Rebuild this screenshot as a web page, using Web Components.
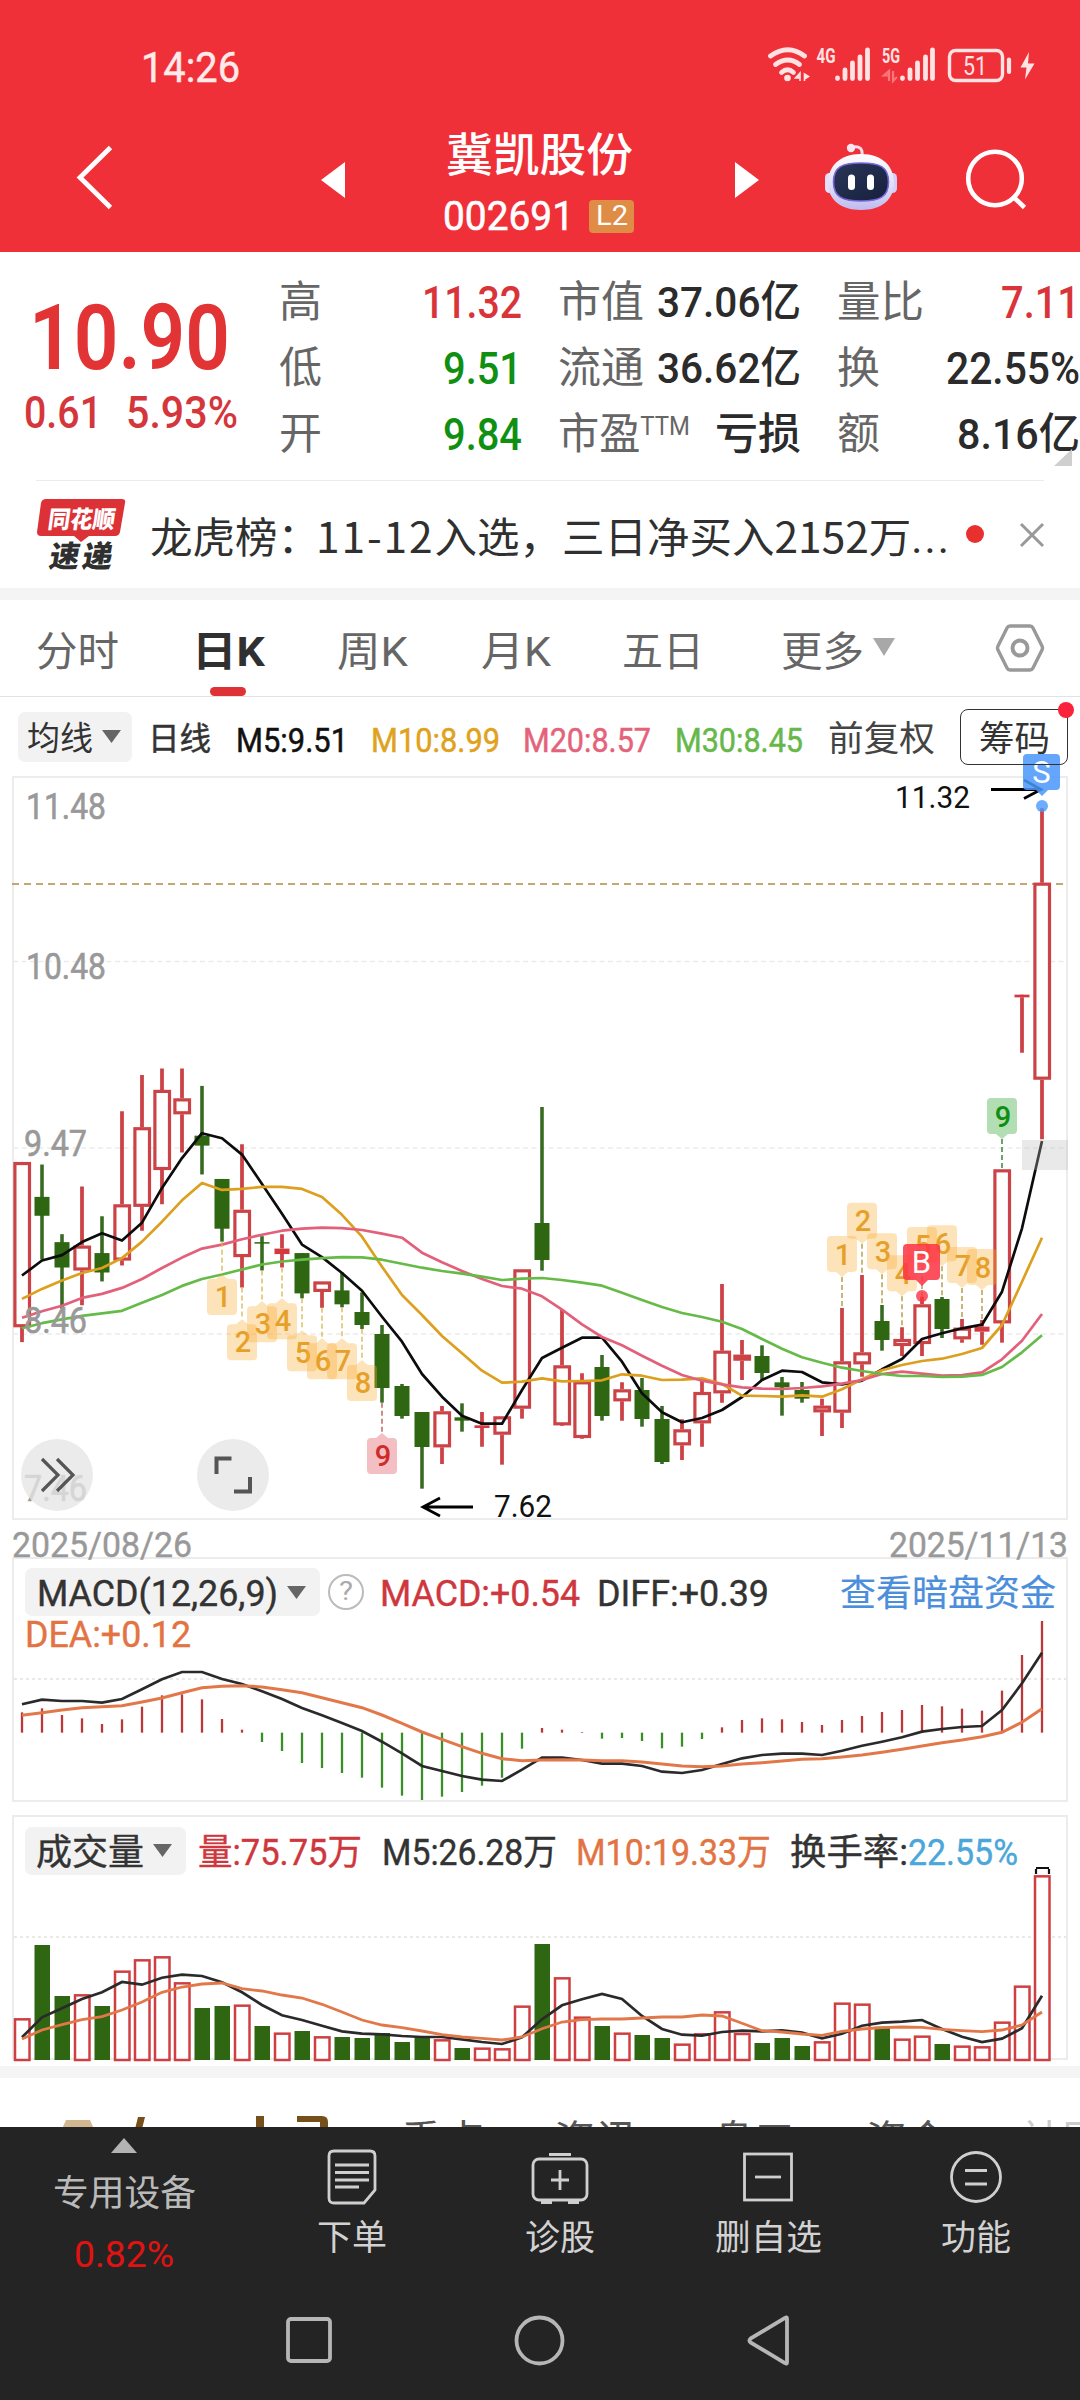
<!DOCTYPE html>
<html lang="zh-CN">
<head>
<meta charset="utf-8">
<title>冀凯股份 002691</title>
<style>
html,body{margin:0;padding:0;background:#fff}
body{width:1080px;height:2400px;overflow:hidden;font-family:Roboto,"Noto Sans CJK SC",sans-serif;color:#333}
</style>
</head>
<body>
<stock-page></stock-page>
<script>
const define = (tag, css, html, ready) => customElements.define(tag, class extends HTMLElement {
  connectedCallback() {
    if (this.shadowRoot) return;
    const root = this.attachShadow({ mode: 'open' });
    const t = document.createElement('template');
    t.innerHTML = `<style>:host{display:block;box-sizing:border-box}*{box-sizing:border-box}svg{display:block;flex:none}${css}</style>` +
      (typeof html === 'function' ? html(this) : html);
    root.append(t.content.cloneNode(true));
    if (ready) ready(this, root);
  }
});

/* text run squeezed or stretched to a given width */
define('fit-text',
  `:host{flex:none;line-height:1.2;white-space:nowrap}span{display:inline-block;transform-origin:0 50%}`,
  `<span><slot></slot></span>`,
  (el, root) => {
    const w = +el.getAttribute('w'), s = root.querySelector('span');
    el.style.width = w + 'px';
    if (el.hasAttribute('size')) el.style.fontSize = el.getAttribute('size') + 'px';
    if (el.hasAttribute('x')) el.style.marginLeft = el.getAttribute('x') + 'px';
    const n = s.getBoundingClientRect().width, dy = el.getAttribute('dy') || 1.5;
    if (n) s.style.transform = `translateY(${dy}px) scaleX(${w / n})`;
  });

define('status-bar',
  `:host{display:flex;height:130px;padding:0 44px 0 141px;justify-content:space-between;align-items:center;color:#ffeaea}svg text{font-family:Roboto}`,
  `<fit-text w="99" size="43" dy="3" style="-webkit-text-stroke:.5px">14:26</fit-text>
  <svg width="268" height="38" viewBox="768 46 268 38" fill="none" stroke="#ffe3e3">
    <g stroke-width="4.800" stroke-linecap="round"><path d="M770.500 56Q788 43.500 804.500 56"/><path d="M775.500 64.500Q788 55.500 799.500 64.500"/><path d="M781.500 72.500Q787.500 67 793.500 72.500"/></g>
    <circle cx="787.500" cy="78" r="3.300" fill="#ffe3e3" stroke="none"/>
    <path d="M800 81v-8l-4.500 5h4.500M804.500 81v-7l4 2.500-4 2.500" stroke-width="1.600" fill="#ffe3e3"/>
    <g fill="#ffe3e3" stroke="none" font-size="20" font-weight="700"><text x="816.500" y="62.500" textLength="19" lengthAdjust="spacingAndGlyphs">4G</text><text x="882" y="62.500" textLength="18" lengthAdjust="spacingAndGlyphs">5G</text></g>
    <g stroke-width="4.800" stroke-linecap="round"><path d="M837.500 78v.500M845 70v8.500M852.500 63v15.500M860 57v21.500M867.500 50v28.500"/><path d="M902.500 78v.500M910 70v8.500M917.500 63v15.500M925.500 57v21.500M932.500 50v28.500"/></g>
    <path d="M889 81v-10l-5 4.500h5M893 71v10l4-4" stroke-width="2.200" opacity=".4"/>
    <rect x="949.500" y="50.500" width="53" height="30" rx="6" stroke-width="3.400"/>
    <path d="M1009 59.500v12.500" stroke-width="4.200" stroke-linecap="round"/>
    <text x="963" y="75" font-size="25" textLength="24" lengthAdjust="spacingAndGlyphs" fill="#ffe3e3" stroke="none">51</text>
    <path d="M1029 52l-8.500 15.500h6l-1.500 12 9.500-16h-6.500z" fill="#ffe3e3" stroke="none"/>
  </svg>`);

define('title-bar',
  `:host{display:flex;height:122px;color:#fff}
  .mid{width:188px;margin-left:101px;display:flex;flex-direction:column}
  .code{display:flex;align-items:center;height:36px;margin-top:16px}
  .l2{width:48px;height:33px;border-radius:4px;background:#df8c46;display:flex;align-items:center;justify-content:center;margin-left:15px}
  .back{margin:15px 0 0 76px}.prev{margin:32px 0 0 208px}.next{margin:32px 0 0 101px}.bot{margin:12px 0 0 65px}.find{margin:18px 0 0 67px}`,
  `<svg class="back" width="37" height="65" fill="none" stroke="#fff" stroke-width="4.800"><path d="M34.500 2.500L4 32.500l30.500 30"/></svg>
  <svg class="prev" width="24" height="36" fill="#fff"><path d="M0 18L24 0v36z"/></svg>
  <div class="mid"><fit-text w="187" size="46" dy="-1" style="font-weight:500;line-height:52px">冀凯股份</fit-text>
    <div class="code"><fit-text w="131" size="41" x="-3" dy="1" style="-webkit-text-stroke:.6px">002691</fit-text><div class="l2"><fit-text w="32" size="28" dy="0">L2</fit-text></div></div></div>
  <svg class="next" width="24" height="36" fill="#fff"><path d="M24 18L0 0v36z"/></svg>
  <svg class="bot" width="74" height="70" viewBox="824 142 74 70">
    <defs><linearGradient id="h" x1="0" y1="0" x2="0" y2="1"><stop offset="0" stop-color="#fff"/><stop offset=".6" stop-color="#dcdcf4"/><stop offset="1" stop-color="#c0baf0"/></linearGradient>
    <linearGradient id="v" x1="0" y1="0" x2="1" y2="1"><stop offset="0" stop-color="#2b3658"/><stop offset="1" stop-color="#161f3d"/></linearGradient></defs>
    <path d="M862 156c1-8-3-10-9-9" fill="none" stroke="#efdcef" stroke-width="3"/><circle cx="851" cy="148" r="4.200" fill="#fbe6f0"/>
    <rect x="825" y="173" width="9" height="20" rx="4.500" fill="#e6defa"/><rect x="888" y="173" width="9" height="20" rx="4.500" fill="#d6cdf8"/>
    <path d="M861 154c22 0 33 13 33 29s-12 27-33 27-33-11-33-27 11-29 33-29z" fill="url(#h)"/>
    <path d="M861 163c19 0 27.500 4 27.500 19s-9 19-27.500 19-27.500-4-27.500-19 8.500-19 27.500-19z" fill="url(#v)" stroke="#7466d8" stroke-width="1.600"/>
    <rect x="848" y="174.500" width="7" height="15.500" rx="3.500" fill="#fff"/><rect x="867" y="174.500" width="7" height="15.500" rx="3.500" fill="#fff"/>
  </svg>
  <svg class="find" width="64" height="64" fill="none" stroke="#fff" stroke-width="4.600"><circle cx="30" cy="30.500" r="26.800"/><path d="M48.500 49l11 10.500"/></svg>`);

define('app-header', `:host{height:252px;background:#f03038}`, `<status-bar></status-bar><title-bar></title-bar>`);

define('quote-board',
  `:host{display:flex;height:229px;padding-top:16px;position:relative;font-size:44px}
  .price{width:250px;margin-left:24px;color:#dc3236;padding-top:17px}
  .chg{display:flex;margin-top:-4px;color:#d5363c;font-weight:500}
  .cols{display:flex}.c{display:flex;flex-direction:column}
  .r{height:66px;display:flex;align-items:center;justify-content:space-between}
  .l{color:#666}.v{font-weight:500;color:#2b2b2b}.red{color:#d8343a}.green{color:#109013}
  .fold{position:absolute;left:1054px;top:197px}
  .line{position:absolute;left:36px;right:36px;bottom:0;height:1.500px;background:#ececec}`,
  `<div class="price"><fit-text w="201" size="90" x="5" dy="2" style="font-weight:600;line-height:104px;color:#e23335">10.90</fit-text>
    <div class="chg"><fit-text w="78" x="0">0.61</fit-text><fit-text w="112" x="24">5.93%</fit-text></div></div>
  <div class="cols">
    <div class="c" style="width:243px;margin-left:6px">
      <div class="r"><fit-text class="l" w="43" size="43">高</fit-text><fit-text class="v red" w="100">11.32</fit-text></div>
      <div class="r"><fit-text class="l" w="43" size="43">低</fit-text><fit-text class="v green" w="79">9.51</fit-text></div>
      <div class="r"><fit-text class="l" w="43" size="43">开</fit-text><fit-text class="v green" w="79">9.84</fit-text></div>
    </div>
    <div class="c" style="width:243px;margin-left:36px">
      <div class="r"><fit-text class="l" w="86" size="43">市值</fit-text><fit-text class="v" w="144" size="43">37.06亿</fit-text></div>
      <div class="r"><fit-text class="l" w="86" size="43">流通</fit-text><fit-text class="v" w="144" size="43">36.62亿</fit-text></div>
      <div class="r"><fit-text class="l" w="132" size="43">市盈<span style="font-size:25px;vertical-align:14px;line-height:0">TTM</span></fit-text><fit-text class="v" w="86" size="43">亏损</fit-text></div>
    </div>
    <div class="c" style="width:243px;margin-left:36px">
      <div class="r"><fit-text class="l" w="87" size="43">量比</fit-text><fit-text class="v red" w="79">7.11</fit-text></div>
      <div class="r"><fit-text class="l" w="43" size="43">换</fit-text><fit-text class="v" w="134">22.55%</fit-text></div>
      <div class="r"><fit-text class="l" w="43" size="43">额</fit-text><fit-text class="v" w="123" size="43">8.16亿</fit-text></div>
    </div>
  </div>
  <svg class="fold" width="18" height="17" fill="#cfcfcf"><path d="M18 0v17H0z"/></svg><div class="line"></div>`);

define('news-ticker',
  `:host{display:flex;height:107px;align-items:center;padding-left:36px}
  .dot{width:18px;height:18px;border-radius:9px;background:#e8302f;margin:-1px 0 0 15px}
  svg text{font-family:"Noto Sans CJK SC";font-weight:900}`,
  `<svg width="90" height="76" viewBox="36 496 90 76"><path d="M46 498h76q4 0 3 4l-5 29q-1 4-5 4H89l-8 6-7-6H41q-4 0-4-4l4-29q1-4 5-4z" fill="#dc3237"/>
    <text transform="translate(47 526.500) skewX(-8)" font-size="24" textLength="67" lengthAdjust="spacingAndGlyphs" fill="#fff">同花顺</text>
    <text transform="translate(48 566) skewX(-10)" font-size="30" textLength="63" lengthAdjust="spacing" fill="#2f2f2f">速递</text></svg>
  <fit-text w="801" size="42" x="24" dy="2.500" style="font-family:'Noto Sans CJK SC';line-height:56px;margin-top:-2px;color:#303030">龙虎榜：<span style="margin-left:-4px;letter-spacing:1.900px">11-12</span>入选，三日净买入2152万<span style="font-family:Roboto;letter-spacing:2px">...</span></fit-text>
  <div class="dot"></div>
  <svg style="margin-left:35px" width="26" height="26" stroke="#999" stroke-width="3"><path d="M2 2l22 22M24 2L2 24"/></svg>`);

define('period-tabs',
  `:host{display:flex;height:97px;border-bottom:1.500px solid #e2e2e2;align-items:center;color:#666;padding:5px 0 0 36px}
  .on{font-weight:700;color:#303030;position:relative}
  .on i{position:absolute;left:18px;top:61px;width:36px;height:9px;border-radius:4.500px;background:#de3237}`,
  `<fit-text w="83" size="41">分时</fit-text>
  <div class="on" style="margin-left:73px"><fit-text w="73" size="41">日K</fit-text><i></i></div>
  <fit-text w="71" size="41" x="72">周K</fit-text>
  <fit-text w="70" size="41" x="73">月K</fit-text>
  <fit-text w="82" size="41" x="71">五日</fit-text>
  <fit-text w="83" size="41" x="77">更多</fit-text>
  <svg style="margin:-7px 0 0 9px" width="22" height="18" fill="#a8a8a8"><path d="M0 0h22L11 18z"/></svg>
  <svg style="margin:-6px 0 0 100px" width="50" height="48" fill="none" stroke="#999" stroke-width="3.400"><path d="M15 2h20q2 0 3 2l9 18q1 2 0 4l-9 18q-1 2-3 2H15q-2 0-3-2L3 26q-1-2 0-4l9-18q1-2 3-2z"/><circle cx="25" cy="24" r="7.500" stroke-width="4"/></svg>`);

define('drop-button',
  `:host{display:flex;align-items:center;background:#f2f2f2;border-radius:7px;flex:none;color:#333}
  svg{margin-left:9px}`,
  `<slot></slot><svg width="19" height="13" fill="#666"><path d="M0 0h19L9.500 13z"/></svg>`);

define('ma-legend',
  `:host{display:flex;height:79px;align-items:center;padding:0 0 0 18px;color:#333}
  .m{-webkit-text-stroke:.5px}
  .chip{width:108px;height:56px;border:1.500px solid #333;border-radius:8px;margin-left:25px;display:flex;align-items:center;justify-content:center;position:relative}
  .chip i{position:absolute;width:16px;height:16px;border-radius:8px;background:#f9243c;right:-7px;top:-8px}`,
  `<drop-button style="width:114px;height:50px;padding-left:9px"><fit-text w="66" size="33">均线</fit-text></drop-button>
  <fit-text class="m" w="63" size="32" x="16" dy="3">日线</fit-text>
  <fit-text class="m" w="112" size="33" x="25" dy="3.500" style="color:#111">M5:9.51</fit-text>
  <fit-text class="m" w="129" size="33" x="23" dy="3.500" style="color:#e0a21c">M10:8.99</fit-text>
  <fit-text class="m" w="128" size="33" x="23" dy="3.500" style="color:#e4637a">M20:8.57</fit-text>
  <fit-text class="m" w="128" size="33" x="24" dy="3.500" style="color:#66b84a">M30:8.45</fit-text>
  <fit-text w="107" size="35" x="25" dy="2.500" style="color:#444">前复权</fit-text>
  <div class="chip"><fit-text w="71" size="35" dy="3">筹码</fit-text><i></i></div>`);

const X = i => 22 + 20 * i;
const pts = (ys, f) => ys.map((v, i) => X(i) + ',' + f(v).toFixed(1)).join(' ');
const A = v => 770 + v / 2.01, B = v => 1050 + v / 3, C = v => 1150 + v / 3, D = v => 740 + v / 3;
/* segments: first 17 points on scale A, next 19 on B, last 16 on C */
const join = (a, b, c) => [...a.map(A), ...b.map(B), ...c.map(C)];
const ma5 = join([1016,986,975,949,931,946,910,840,780,730,740,773,832,892,954,979,1011],
  [722,800,875,972,1040,1097,1121,1121,1020,924,893,863,863,935,1030,1087,1117,1104,1080],
  [741,690,662,666,697,703,692,658,627,567,550,535,524,425,235,-27]);
const ma10 = join([1063,1043,1026,1011,1001,981,948,908,865,830,844,842,838,838,842,858,894],
  [560,650,735,795,858,910,962,998,995,985,994,993,991,973,977,990,989,985,1002],
  [737,738,740,736,740,718,688,661,645,633,626,612,594,525,395,263]);
const ma20 = join([1101,1088,1077,1061,1053,1041,1023,1001,980,962,954,943,934,926,922,920,921],
  [540,551,563,608,637,663,687,708,716,739,779,823,861,886,917,947,975,992,1003],
  [712,716,717,714,709,701,690,672,665,671,677,675,667,628,572,492]);
const ma30 = join([1122,1112,1104,1097,1092,1087,1071,1055,1037,1023,1014,1004,994,988,984,981,979],
  [622,629,641,653,663,671,680,690,686,684,690,698,707,728,750,771,789,801,815],
  [537,567,596,622,638,653,663,672,678,678,681,680,675,651,607,556]);
/* colour, high, low, body top, body bottom */
const candles = [
  ...[['r',788,1150,788,1120],['g',793,984,858,896],['g',933,1083,949,1000],['r',837,1076,956,1006],['g',897,1028,971,1010],['r',686,996,873,986],['r',613,926,718,878],['r',600,873,643,804],['r',600,769,660,692],['g',635,813,735,755],['g',822,948,822,922],['r',752,1040,884,979],['g',937,1006,949,952],['r',933,1000,962,973],['g',971,1062,971,1052],['r',1028,1081,1028,1049],['g',1010,1080,1046,1074]].map(([k,...v]) => [k,...v.map(A)]),
  ...[['g',727,837,786,825],['g',825,1058,852,1014],['g',1002,1106,1008,1098],['g',1086,1316,1086,1191],['r',1068,1242,1084,1192],['g',1060,1145,1102,1112],['r',1086,1190,1126,1134],['r',1099,1244,1099,1154],['r',658,1106,658,1076],['g',171,662,519,630],['r',780,1128,946,1126],['r',970,1166,994,1164],['g',915,1112,951,1098],['r',997,1112,1018,1054],['g',984,1130,1020,1107],['g',1068,1242,1107,1236],['r',1108,1230,1138,1186],['r',990,1190,1026,1120],['r',702,1058,902,1030],['r',870,990,914,932]].map(([k,...v]) => [k,...v.map(B)]),
  ...[['g',586,690,618,669],['g',681,797,697,712],['g',696,758,720,746],['r',746,858,767,787],['r',474,834,634,788],['r',375,680,607,643],['g',465,602,513,570],['r',532,618,567,588],['r',440,618,463,582],['g',441,564,447,537],['r',507,578,533,568],['r',510,584,530,545],['r',58,578,58,520]].map(([k,...v]) => [k,...v.map(C)]),
  ...[['r',766,938,764,772],['r',205,1198,428,1019]].map(([k,...v]) => [k,...v.map(D)])
];
const candle = ([k, h, l, t, b], i) => {
  const x = X(i);
  if (k === 'g') return `<path d="M${x} ${h}V${l}" stroke="#366b22" stroke-width="3.6"/><rect x="${x - 7.5}" y="${t}" width="15" height="${Math.max(b - t, 1.5)}" fill="#2f6612"/>`;
  const wick = `<path d="M${x} ${h}V${t}M${x} ${b}V${l}" stroke="#cc4347" stroke-width="3.8"/>`;
  return wick + (b - t < 5.9 ? `<rect x="${x - 7.5}" y="${t}" width="15" height="${b - t}" fill="#d23a3f"/>`
    : `<rect x="${x - 7.1}" y="${t + 1.5}" width="14.6" height="${b - t - 3}" fill="#fff" stroke="#cc4347" stroke-width="3.2"/>`);
};
const amber = ['#f8ae33', '#e6a02a', '.34'], rose = ['#e0444c', '#cf2b2b', '.34'], leaf = ['#2ba02b', '#0f8f12', '.36'];
/* count marks below (apex up) and above (apex down) the candles */
const below = (n, i, top, low, c = amber) => { const x = X(i);
  return `<path d="M${x} ${low}V${top}" stroke="${c === amber ? '#d9b552' : '#b0504c'}" stroke-width="1.3" stroke-dasharray="5 3"/>
  <path d="M${x} ${top}l6 5h5q4 0 4 4v28q0 4-4 4h-22q-4 0-4-4v-28q0-4 4-4h5z" fill="${c[0]}" fill-opacity="${c[2]}"/>
  <text x="${x + 1}" y="${top + 33}" text-anchor="middle" font-size="29" font-weight="500" fill="${c[1]}">${n}</text>`; };
const above = (n, i, top, high, c = amber) => { const x = X(i);
  return `<path d="M${x} ${top + 41}V${high}" stroke="${c === amber ? '#b09a40' : '#2f7a2f'}" stroke-width="1.400" stroke-dasharray="5 3"/>
  <path d="M${x} ${top + 41}l6-5h5q4 0 4-4v-28q0-4-4-4h-22q-4 0-4 4v28q0 4 4 4h5z" fill="${c[0]}" fill-opacity="${c[2]}"/>
  <text x="${x + 1}" y="${top + 28.5}" text-anchor="middle" font-size="29" font-weight="500" fill="${c[1]}">${n}</text>`; };
const deal = (s, x, top, c) => `<path d="M${x} ${top + 42}l6-6h8q4 0 4-4v-28q0-4-4-4h-29q-4 0-4 4v28q0 4 4 4h9z" fill="${c}" fill-opacity=".86"/><circle cx="${x}" cy="${top + 52}" r="6" fill="${c}" fill-opacity=".8"/><text x="${x - .5}" y="${top + 29}" text-anchor="middle" font-size="31" fill="#fff">${s}</text>`;

define('k-line-chart',
  `:host{height:744px}svg{overflow:visible}text{font-family:Roboto,sans-serif}`,
  () => `<svg width="1080" height="744" viewBox="0 776 1080 744">
  <rect x="13" y="777" width="1054" height="742" fill="none" stroke="#ececec" stroke-width="2"/>
  <path d="M13 961.500H1064M13 1148H1064M13 1334H1064" stroke="#ebebeb" stroke-width="1.700" stroke-dasharray="5 3.500"/>
  <path d="M12 884H1064" stroke="#c3a873" stroke-width="1.800" stroke-dasharray="7 5"/>
  ${candles.map(candle).join('')}
  <g fill="none" stroke-width="2.700" stroke-linejoin="round">
    <polyline points="${pts(ma5, v => v)}" stroke="#0c0c0c"/><polyline points="${pts(ma10, v => v)}" stroke="#dd9f1e"/>
    <polyline points="${pts(ma20, v => v)}" stroke="#e2607a"/><polyline points="${pts(ma30, v => v)}" stroke="#66bb48"/></g>
  <g font-size="36" fill="#999" stroke="#999" stroke-width=".6">
    <text x="26" y="819" textLength="80" lengthAdjust="spacingAndGlyphs">11.48</text><text x="26" y="978.500" textLength="80" lengthAdjust="spacingAndGlyphs">10.48</text>
    <text x="24" y="1156" textLength="63" lengthAdjust="spacingAndGlyphs">9.47</text><text x="24" y="1333" textLength="63" lengthAdjust="spacingAndGlyphs">8.46</text>
    <text x="24" y="1501" textLength="63" lengthAdjust="spacingAndGlyphs">7.46</text></g>
  ${[['1',10,1013,948],['2',11,1104,1040],['3',12,1068,1006],['4',13,1062,1000],['5',14,1126,1062],['6',15,1142,1081],['7',16,1142,1080],['8',17,1186,1123]].map(([n,i,t,l]) => below(n, i, A(t), A(l))).join('')}
  ${below('9', 18, 1433, B(1058), rose)}
  ${[['1',41,258,474],['2',42,158,375],['3',43,250,465],['4',44,316,532],['5',45,231,440],['6',46,226,441],['7',47,291,507],['8',48,297,510]].map(([n,i,t,h]) => above(n, i, C(t), C(h))).join('')}
  ${above('9', 49, 1098, C(58), leaf)}
  <rect x="1022" y="1140" width="46" height="30" fill="#bbb" fill-opacity=".32"/>
  <g fill="none" stroke="#000" stroke-width="2.800"><path d="M991 789.500H1041M1024 780l17 9.500-17 9"/><path d="M473 1507H424M440 1498l-17 9 17 9"/></g>
  <g font-size="31" fill="#111"><text x="895" y="808" textLength="75" lengthAdjust="spacingAndGlyphs">11.32</text><text x="494" y="1516.500" textLength="58" lengthAdjust="spacingAndGlyphs">7.62</text></g>
  ${deal('B', 922, 1244, '#fb3345')}${deal('S', 1042, 754, '#4a97fc')}
  <g fill="#e6e6e6" fill-opacity=".78"><circle cx="57" cy="1475" r="36"/><circle cx="233" cy="1475" r="36"/></g>
  <g fill="none" stroke="#555" stroke-width="3.200"><path d="M42 1459l16 16-16 16M57 1459l16 16-16 16"/><path d="M216.500 1474v-15.500h15M250 1477v14.500h-16" stroke-width="4"/></g>
  </svg>`);

define('date-axis', `:host{display:flex;justify-content:space-between;height:37px;padding:0 12px;color:#999;font-size:35px}fit-text{line-height:48px;-webkit-text-stroke:.4px}`,
  `<fit-text w="180" dy="2">2025/08/26</fit-text><fit-text w="179" dy="2">2025/11/13</fit-text>`);

const M = v => 1520 + v / 3, V = v => 1800 + v / 3;
const macd = [577,565,585,595,612,598,560,526,523,538,597,629,666,693,729,744,759,773,803,827,842,830,816,797,773,686,624,629,636,656,654,663,685,680,657,622,600,595,598,606,615,600,588,576,570,555,559,566,572,512,405,303];
const diff = [553,539,543,543,548,537,508,478,456,456,477,492,514,537,564,586,609,633,665,700,738,753,768,779,783,749,713,713,720,731,731,738,755,759,750,732,715,705,701,701,705,692,677,665,652,635,627,621,618,570,490,398];
const dea = [586,578,570,563,560,557,546,534,518,503,499,497,501,509,518,533,548,563,585,610,636,658,680,700,716,722,720,719,720,722,722,726,732,738,740,738,732,728,723,718,716,711,705,697,688,678,668,660,650,637,607,566];

define('macd-panel',
  `:host{height:245px;margin:0 12px;border:2px solid #ececec;color:#333;padding:9px 0 0 11px;display:flex;flex-direction:column;overflow:hidden}
  .row{display:flex;align-items:center;height:50px;-webkit-text-stroke:.4px}.row2{height:36px;color:#e27443;-webkit-text-stroke:.4px}
  .help{width:36px;height:36px;border:2px solid #bbb;border-radius:18px;color:#aaa;display:flex;align-items:center;justify-content:center;margin-left:8px;-webkit-text-stroke:0}
  svg.plot{margin:0 0 0 -13px}`,
  () => `<div class="row"><drop-button style="width:295px;height:48px;padding-left:12px"><fit-text w="241" size="36" dy="3">MACD(12,26,9)</fit-text></drop-button>
    <div class="help"><fit-text w="14" size="26" dy="0">?</fit-text></div>
    <fit-text w="200" size="36" x="16" dy="3" style="color:#ce373d">MACD:+0.54</fit-text><fit-text w="172" size="36" x="17" dy="3">DIFF:+0.39</fit-text>
    <fit-text w="216" size="36" x="71" dy="3" style="color:#4b8edb;-webkit-text-stroke:.2px">查看暗盘资金</fit-text></div>
  <div class="row2"><fit-text w="166" size="36" dy="3" style="margin-top:-5px">DEA:+0.12</fit-text></div>
  <svg class="plot" style="margin-top:-84.500px" width="1056" height="243" viewBox="12 1568 1056 243" overflow="visible">
    <path d="M14 1679H1066" stroke="#e3e3dc" stroke-width="1.400" stroke-dasharray="3 3"/>
    ${macd.map((v, i) => `<path d="M${X(i)} ${M(638)}V${M(v)}" stroke="${v > 638 ? '#388f27' : '#b9383a'}" stroke-width="2.300"/>`).join('')}
    <polyline points="${pts(diff, M)}" fill="none" stroke="#2a2a2a" stroke-width="2.700"/><polyline points="${pts(dea, M)}" fill="none" stroke="#e2784a" stroke-width="3"/>
  </svg>`);

const vols = 'r655 g435 g588 r583 g618 r512 r478 r469 r547 g624 g618 r614 g678 r698 g693 r709 g711 g714 g699 g726 g711 r718 g744 r743 r745 r617 g432 r532 r650 g678 r698 g705 g714 r731 r700 r634 r699 g729 g714 g738 r724 r608 r611 g680 r716 r707 g732 r737 r739 r665 r557 r226'.split(' ');
const vm5 = [712,652,625,597,577,546,554,533,524,528,547,577,615,646,660,677,694,701,703,708,711,711,718,726,732,712,658,616,598,582,597,648,687,704,707,696,692,694,691,698,715,701,677,668,665,660,687,710,726,716,685,587];
const vm10 = [717,690,674,659,650,630,606,577,561,552,549,566,573,585,594,613,636,660,675,683,693,704,711,715,720,711,686,666,659,657,657,654,651,651,645,648,670,692,696,702,706,694,687,683,681,682,688,692,695,690,675,636];

define('volume-panel',
  `:host{height:245px;margin:13px 12px 0;border:2px solid #ececec;padding:9px 0 0 11px;color:#333}
  .row{display:flex;align-items:center;height:49px;-webkit-text-stroke:.4px}svg.plot{overflow:visible;margin:-58px 0 0 -13px}`,
  () => `<div class="row"><drop-button style="width:161px;height:48px;padding-left:11px"><fit-text w="108" size="36" dy="3">成交量</fit-text></drop-button>
    <fit-text w="164" size="36" x="12" dy="3" style="color:#ce373d">量:75.75万</fit-text><fit-text w="175" size="36" x="20" dy="3">M5:26.28万</fit-text>
    <fit-text w="195" size="36" x="19" dy="3" style="color:#e27443">M10:19.33万</fit-text><fit-text w="118" size="36" x="19" dy="3">换手率:</fit-text><fit-text w="110" size="36" x="0" dy="3" style="color:#4ba7da">22.55%</fit-text></div>
  <svg class="plot" width="1056" height="243" viewBox="12 1817 1056 243">
    <path d="M14 1937H1066" stroke="#e3e3dc" stroke-width="1.400" stroke-dasharray="3 3"/>
    ${vols.map((s, i) => { const y = V(+s.slice(1)), x = X(i);
      return s[0] === 'g' ? `<rect x="${x - 7.5}" y="${y}" width="15.500" height="${2060 - y}" fill="#2f6612"/>`
        : `<rect x="${x - 7}" y="${y + 1}" width="14.500" height="${2059 - y}" fill="#fff" stroke="#cf3f42" stroke-width="2.500"/>`; }).join('')}
    <path d="M1036 1874v-6h13v6" fill="none" stroke="#111" stroke-width="2.200" stroke-dasharray="5 1 13 1 5"/>
    <polyline points="${pts(vm5, V)}" fill="none" stroke="#2a2a2a" stroke-width="2.700"/><polyline points="${pts(vm10, V)}" fill="none" stroke="#e2784a" stroke-width="2.800"/>
  </svg>`);

define('section-tabs',
  `:host{display:flex;height:61px;margin-top:6px;border-top:12px solid #f4f4f4;padding-top:37px;overflow:hidden;color:#555;font-size:41px}fit-text{line-height:48px}`,
  `<svg width="400" height="12" viewBox="0 2115 400 12"><path d="M66 2120h24l4 9H62z" fill="#d3b791"/><path d="M138 2117h7l-3 12h-7zM256 2116h8v12h-8zM297 2116h25q6 0 6 6v7h-8v-7h-23z" fill="#76501a"/></svg>
  <fit-text w="85">重点</fit-text><fit-text w="83" x="69">资讯</fit-text><fit-text w="82" x="76">盘口</fit-text><fit-text w="82" x="71">资金</fit-text><fit-text w="82" x="73" style="color:#ccc">社区</fit-text>`);

define('trade-bar',
  `:host{display:flex;height:173px;color:#d2d2d2;font-size:35px}
  .i{display:flex;flex-direction:column;align-items:center;width:208px;padding-top:20px}
  .i fit-text{margin-top:9px}`,
  `<div style="width:248px;display:flex;flex-direction:column;align-items:center;padding-top:11px">
    <svg width="26" height="15" fill="#b3b3b3"><path d="M13 0l13 15H0z"/></svg>
    <fit-text w="143" size="36" dy="3" style="color:#bababa;margin-top:17px">专用设备</fit-text><fit-text w="100" size="37" dy="2.500" style="color:#e01313;margin-top:17px">0.82%</fit-text></div>
  <div class="i"><svg width="50" height="58" fill="none" stroke="#cfcfcf" stroke-width="2.800"><path d="M7 4h36q5 0 5 5v34L37 56H7q-5 0-5-5V9q0-5 5-5z"/><path d="M8 18h34M8 25.500h34M8 33h34M8 40h24"/></svg><fit-text w="70" dy="4">下单</fit-text></div>
  <div class="i"><svg width="58" height="58" fill="none" stroke="#cfcfcf" stroke-width="2.800"><rect x="2" y="12" width="54" height="41" rx="6"/><path d="M18 7.500h22M10 55.500h11M37 55.500h11M20 33h18M29 23v20"/></svg><fit-text w="70" dy="4">诊股</fit-text></div>
  <div class="i"><svg width="50" height="58" fill="none" stroke="#cfcfcf" stroke-width="2.800"><rect x="1.500" y="7" width="47" height="46"/><path d="M12 30h26"/></svg><fit-text w="107" dy="4">删自选</fit-text></div>
  <div class="i"><svg width="54" height="58" fill="none" stroke="#cfcfcf" stroke-width="2.800"><circle cx="27" cy="30" r="24.500"/><path d="M16 23.500h22M16 37h22"/></svg><fit-text w="70" dy="4">功能</fit-text></div>`);

define('system-nav', `:host{display:flex;justify-content:space-between;align-items:center;height:100px;padding:0 290px 20px 286px}`,
  `<svg width="46" height="46" fill="none" stroke="#b6b6b6" stroke-width="3.800"><rect x="2" y="2" width="42" height="42" rx="3"/></svg>
  <svg width="51" height="51" fill="none" stroke="#b6b6b6" stroke-width="3.800"><circle cx="25.500" cy="25.500" r="23"/></svg>
  <svg width="43" height="51" fill="none" stroke="#b6b6b6" stroke-width="3.800"><path d="M40 3.500v44q0 2-2 .5L3.500 27.500q-2-2 0-4L38 3q2-1.500 2 .5z"/></svg>`);

define('stock-page', `:host{width:1080px;height:2400px;background:#fff;overflow:hidden}.band{height:12px;background:#f4f4f4}.dock{background:#242424;height:273px}`,
  `<app-header></app-header><quote-board></quote-board><news-ticker></news-ticker><div class="band"></div>
  <period-tabs></period-tabs><ma-legend></ma-legend><k-line-chart></k-line-chart><date-axis></date-axis>
  <macd-panel></macd-panel><volume-panel></volume-panel><section-tabs></section-tabs>
  <div class="dock"><trade-bar></trade-bar><system-nav></system-nav></div>`);
</script>
</body>
</html>
